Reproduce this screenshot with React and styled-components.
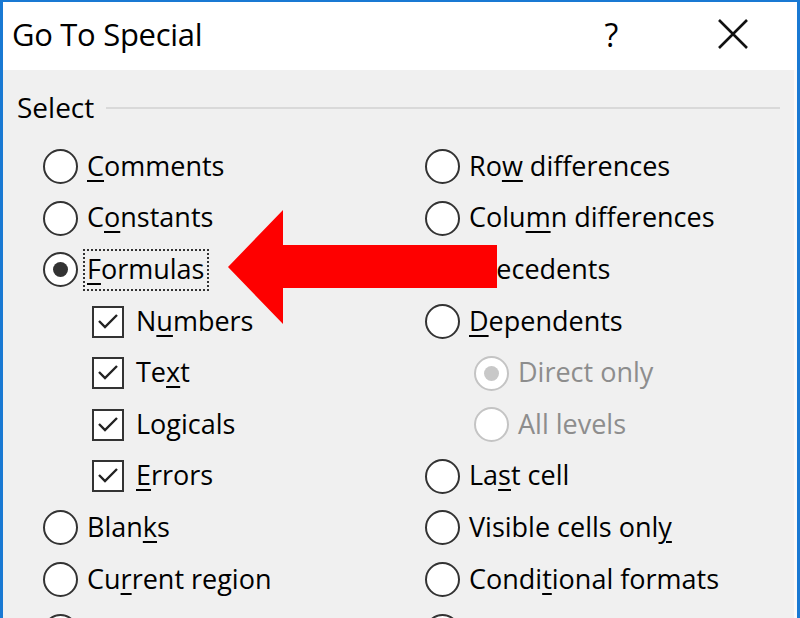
import React from "react";
import styled, { createGlobalStyle } from "styled-components";

const GlobalStyle = createGlobalStyle`
  html, body {
    margin: 0;
    padding: 0;
    overflow: hidden;
    background: #ffffff;
  }
  body {
    font-family: "Open Sans", "Noto Sans", "Liberation Sans", sans-serif;
    color: #000;
  }
`;

// the last row sits under the bottom edge, only its buttons peek through
const LEFT_OPTIONS = [
  { type: "radio", label: "Comments", key: "C" },
  { type: "radio", label: "Constants", key: "o" },
  { type: "radio", label: "Formulas", key: "F", checked: true, focused: true },
  { type: "check", label: "Numbers", key: "u", checked: true, indent: true },
  { type: "check", label: "Text", key: "x", checked: true, indent: true },
  { type: "check", label: "Logicals", key: "g", checked: true, indent: true },
  { type: "check", label: "Errors", key: "E", checked: true, indent: true },
  { type: "radio", label: "Blanks", key: "k" },
  { type: "radio", label: "Current region", key: "r" },
  { type: "radio", label: "" },
];

const RIGHT_OPTIONS = [
  { type: "radio", label: "Row differences", key: "w" },
  { type: "radio", label: "Column differences", key: "m" },
  { type: "radio", label: "Precedents", key: "P" },
  { type: "radio", label: "Dependents", key: "D" },
  { type: "radio", label: "Direct only", indent: true, disabled: true, checked: true },
  { type: "radio", label: "All levels", indent: true, disabled: true },
  { type: "radio", label: "Last cell", key: "s" },
  { type: "radio", label: "Visible cells only", key: "y" },
  { type: "radio", label: "Conditional formats", key: "t" },
  { type: "radio", label: "" },
];

// underline the access key letter the way Windows dialogs do
function Mnemonic({ text, letter }) {
  if (!letter) return text;
  const i = text.indexOf(letter);
  if (i < 0) return text;
  return (
    <>
      {text.slice(0, i)}
      <u>{text[i]}</u>
      {text.slice(i + 1)}
    </>
  );
}

function Option({ opt }) {
  return (
    <Row $indent={opt.indent}>
      {opt.type === "radio" ? (
        <Radio $disabled={opt.disabled}>
          {opt.checked && <Dot $disabled={opt.disabled} />}
        </Radio>
      ) : (
        <CheckBox>
          {opt.checked && (
            <svg width="22" height="18" viewBox="0 0 22 18">
              <polyline
                points="2,8 8,14 20,2"
                fill="none"
                stroke="#222"
                strokeWidth="2.4"
              />
            </svg>
          )}
        </CheckBox>
      )}
      {opt.label && (
        <Label
          $disabled={opt.disabled}
          $focused={opt.focused}
          $check={opt.type === "check"}
        >
          <Mnemonic text={opt.label} letter={opt.key} />
        </Label>
      )}
    </Row>
  );
}

const App = () => {
  return (
    <>
      <GlobalStyle />
      <Window>
        <TitleBar>
          <Title>Go To Special</Title>
          <HelpButton>?</HelpButton>
          <CloseButton>
            <svg width="32" height="30" viewBox="0 0 32 30">
              <path d="M2 1 L30 29 M30 1 L2 29" stroke="#111" strokeWidth="2.6" />
            </svg>
          </CloseButton>
        </TitleBar>
        <Content>
          <GroupHeader>
            <GroupTitle>Select</GroupTitle>
            <GroupLine />
          </GroupHeader>
          <Columns>
            <Column>
              {LEFT_OPTIONS.map((o, i) => (
                <Option key={i} opt={o} />
              ))}
            </Column>
            <Column>
              {RIGHT_OPTIONS.map((o, i) => (
                <Option key={i} opt={o} />
              ))}
            </Column>
          </Columns>
          <Arrow width="800" height="618" viewBox="0 0 800 618">
            <polygon
              points="228,267 283,210 283,245 497,245 497,288 283,288 283,324"
              fill="#fe0000"
            />
          </Arrow>
        </Content>
      </Window>
    </>
  );
};

const Window = styled.div`
  position: relative;
  width: 800px;
  height: 618px;
  box-sizing: border-box;
  border-top: 2px solid #1979d3;
  border-left: 3px solid #1979d3;
  border-right: 3px solid #1979d3;
  overflow: hidden;
  display: flex;
  flex-direction: column;
`;

const TitleBar = styled.div`
  height: 68px;
  flex: none;
  display: flex;
  align-items: center;
  background: #ffffff;
  padding-left: 9px;
`;

const Title = styled.div`
  flex: 1;
  font-size: 31px;
  letter-spacing: -0.3px;
  padding-bottom: 4px;
`;

const HelpButton = styled.div`
  width: 115px;
  text-align: center;
  font-size: 32px;
  padding-bottom: 4px;
`;

const CloseButton = styled.div`
  width: 128px;
  display: flex;
  justify-content: center;
  padding-bottom: 4px;
`;

const Content = styled.div`
  flex: 1;
  background: #f0f0f0;
  border-right: 3px solid #fafafa;
  padding: 19px 14px 0 14px;
`;

const GroupHeader = styled.div`
  height: 38px;
  display: flex;
  align-items: center;
  gap: 12px;
`;

const GroupTitle = styled.div`
  font-size: 28px;
  padding-bottom: 3px;
`;

const GroupLine = styled.div`
  flex: 1;
  height: 2px;
  background: #d9d9d9;
`;

const Columns = styled.div`
  display: grid;
  grid-template-columns: 382px 1fr;
  margin-top: 14px;
  padding-left: 26px;
`;

const Column = styled.div`
  display: flex;
  flex-direction: column;
`;

const Row = styled.div`
  height: 51.6px;
  display: flex;
  align-items: center;
  padding-left: ${(p) => (p.$indent ? "49px" : "0")};
`;

const Radio = styled.div`
  width: 35px;
  height: 35px;
  flex: none;
  box-sizing: border-box;
  border-radius: 50%;
  border: 2.5px solid ${(p) => (p.$disabled ? "#c4c4c4" : "#333")};
  background: #fff;
  display: flex;
  align-items: center;
  justify-content: center;
`;

const Dot = styled.div`
  width: 15px;
  height: 15px;
  border-radius: 50%;
  background: ${(p) => (p.$disabled ? "#c8c8c8" : "#333")};
`;

const CheckBox = styled.div`
  width: 32px;
  height: 32px;
  flex: none;
  box-sizing: border-box;
  border: 2.5px solid #333;
  background: #fff;
  display: flex;
  align-items: center;
  justify-content: center;
`;

const Label = styled.div`
  font-size: 27px;
  line-height: 36px;
  white-space: nowrap;
  margin-left: ${(p) => (p.$check ? "8px" : "5px")};
  padding: 0 3px 2px 2px;
  color: ${(p) => (p.$disabled ? "#8d8d8d" : "#000")};
  border: 2px dotted ${(p) => (p.$focused ? "#333" : "transparent")};
  u {
    text-decoration-thickness: 2px;
    text-underline-offset: 4px;
  }
`;

const Arrow = styled.svg`
  position: absolute;
  left: -3px;
  top: -2px;
  pointer-events: none;
`;

export default App;
